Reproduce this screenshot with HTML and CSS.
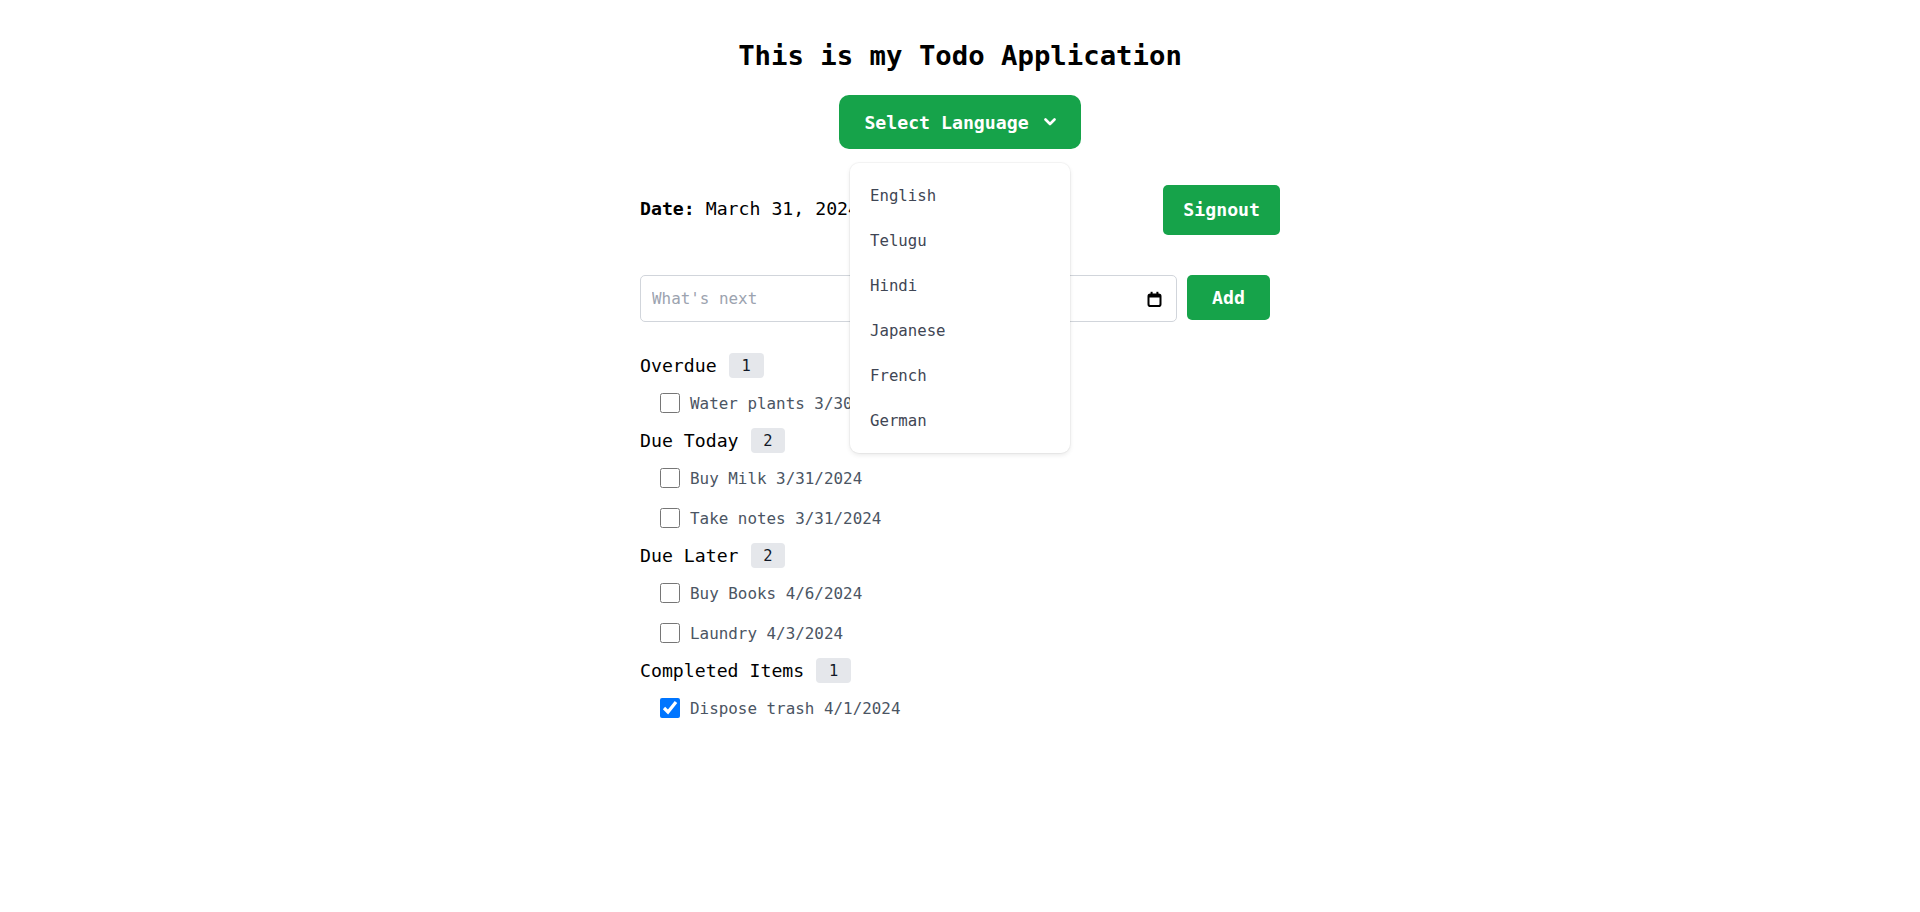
FILE: index.html
```html
<!DOCTYPE html>
<html lang="en">
<head>
<meta charset="utf-8">
<title>Todo Application</title>
<link rel="stylesheet" href="styles.css">
</head>
<body>
<main class="app">
  <header class="header">
    <h1 class="title">This is my Todo Application</h1>
    <div class="lang">
      <button class="lang-btn" type="button">
        <span>Select Language</span>
        <svg class="chev" width="12" height="8" viewBox="0 0 12 8"><polyline points="1.5,1.5 6,6 10.5,1.5" fill="none" stroke="#fff" stroke-width="2.6" stroke-linecap="round" stroke-linejoin="round"/></svg>
      </button>
      <ul class="lang-menu">
        <li>English</li>
        <li>Telugu</li>
        <li>Hindi</li>
        <li>Japanese</li>
        <li>French</li>
        <li>German</li>
      </ul>
    </div>
  </header>

  <div class="date-row">
    <p class="date"><b>Date:</b> March 31, 2024</p>
    <button class="btn signout" type="button">Signout</button>
  </div>

  <form class="add-form">
    <div class="field">
      <input class="text-input" type="text" placeholder="What's next">
      <svg class="cal" width="15" height="16" viewBox="0 0 15 16"><rect x="1.5" y="3.5" width="12" height="11.5" rx="1.8" fill="none" stroke="#000" stroke-width="2"/><rect x="1.5" y="3.5" width="12" height="3" fill="#000"/><rect x="3.6" y="0.8" width="2" height="3.4" fill="#000"/><rect x="9.4" y="0.8" width="2" height="3.4" fill="#000"/></svg>
    </div>
    <button class="btn add" type="button">Add</button>
  </form>

  <section class="list">
    <div class="group-head"><h2>Overdue</h2><span class="badge">1</span></div>
    <label class="item"><input type="checkbox"><span>Water plants 3/30/2024</span></label>

    <div class="group-head"><h2>Due Today</h2><span class="badge">2</span></div>
    <label class="item"><input type="checkbox"><span>Buy Milk 3/31/2024</span></label>
    <label class="item"><input type="checkbox"><span>Take notes 3/31/2024</span></label>

    <div class="group-head"><h2>Due Later</h2><span class="badge">2</span></div>
    <label class="item"><input type="checkbox"><span>Buy Books 4/6/2024</span></label>
    <label class="item"><input type="checkbox"><span>Laundry 4/3/2024</span></label>

    <div class="group-head"><h2>Completed Items</h2><span class="badge">1</span></div>
    <label class="item"><input type="checkbox" checked><span>Dispose trash 4/1/2024</span></label>
  </section>
</main>
</body>
</html>
```

FILE: styles.css
```css
html, body {
  margin: 0;
  padding: 0;
  background: #fff;
}

body {
  font-family: "DejaVu Sans Mono", "Liberation Mono", monospace;
  color: #000;
}

.app {
  width: 640px;
  margin: 0 auto;
}

.header {
  text-align: center;
  padding-top: 36px;
}

.title {
  margin: 0;
  font-size: 27.3px;
  line-height: 40px;
  font-weight: bold;
  color: #000;
}

.lang {
  position: relative;
  display: inline-block;
  margin-top: 19px;
}

.lang-btn {
  display: flex;
  align-items: center;
  gap: 15px;
  height: 54px;
  padding: 0 25px 0 25px;
  border: none;
  border-radius: 10px;
  background: #16a34a;
  color: #fff;
  font-family: inherit;
  font-size: 18.2px;
  font-weight: bold;
}

.chev {
  display: block;
}

.lang-menu {
  position: absolute;
  top: 68px;
  left: 50%;
  margin: 0 0 0 -110px;
  width: 220px;
  box-sizing: border-box;
  padding: 10px 0;
  list-style: none;
  background: #fff;
  border-radius: 9px;
  box-shadow: 0 0 0 1px rgba(0, 0, 0, 0.035), 0 2px 5px rgba(0, 0, 0, 0.09);
  text-align: left;
  z-index: 10;
}

.lang-menu li {
  height: 45px;
  line-height: 45px;
  padding: 0 20px;
  font-size: 15.7px;
  color: #3f4654;
}

.date-row {
  display: flex;
  justify-content: space-between;
  align-items: center;
  margin-top: 36px;
  height: 50px;
}

.date {
  margin: 0;
  font-size: 18.2px;
  line-height: 24px;
  padding-bottom: 2px;
  color: #000;
}

.btn {
  border: none;
  background: #16a34a;
  color: #fff;
  font-family: inherit;
  font-size: 18.2px;
  font-weight: bold;
  border-radius: 5px;
}

.signout {
  height: 50px;
  padding: 0 20px 2px;
}

.add-form {
  display: flex;
  align-items: flex-start;
  gap: 10px;
  margin: 40px 0 0 0;
}

.field {
  flex: 1;
  display: flex;
  align-items: center;
  height: 47px;
  box-sizing: border-box;
  border: 1px solid #d1d5db;
  border-radius: 5px;
  padding: 0 14px 0 11px;
}

.text-input {
  flex: 1;
  border: none;
  outline: none;
  background: transparent;
  padding: 0;
  font-family: inherit;
  font-size: 15.9px;
  color: #111;
}

.text-input::placeholder {
  color: #9ca3af;
}

.cal {
  display: block;
}

.add {
  height: 45px;
  width: 83px;
  padding: 0;
  margin-right: 10px;
}

.list {
  margin-top: 26px;
}

.group-head {
  display: flex;
  align-items: center;
  gap: 12px;
  height: 35px;
}

.group-head h2 {
  margin: 0;
  font-size: 18.2px;
  font-weight: normal;
  color: #000;
}

.badge {
  display: inline-block;
  height: 25px;
  line-height: 27px;
  padding: 0 12.8px;
  border-radius: 4px;
  background: #e5e7eb;
  color: #111827;
  font-size: 15.4px;
}

.item {
  display: flex;
  align-items: center;
  gap: 10px;
  height: 40px;
  padding-left: 20px;
  font-size: 15.9px;
  color: #4b5563;
}

.item input {
  width: 20px;
  height: 20px;
  margin: 0;
}
```
